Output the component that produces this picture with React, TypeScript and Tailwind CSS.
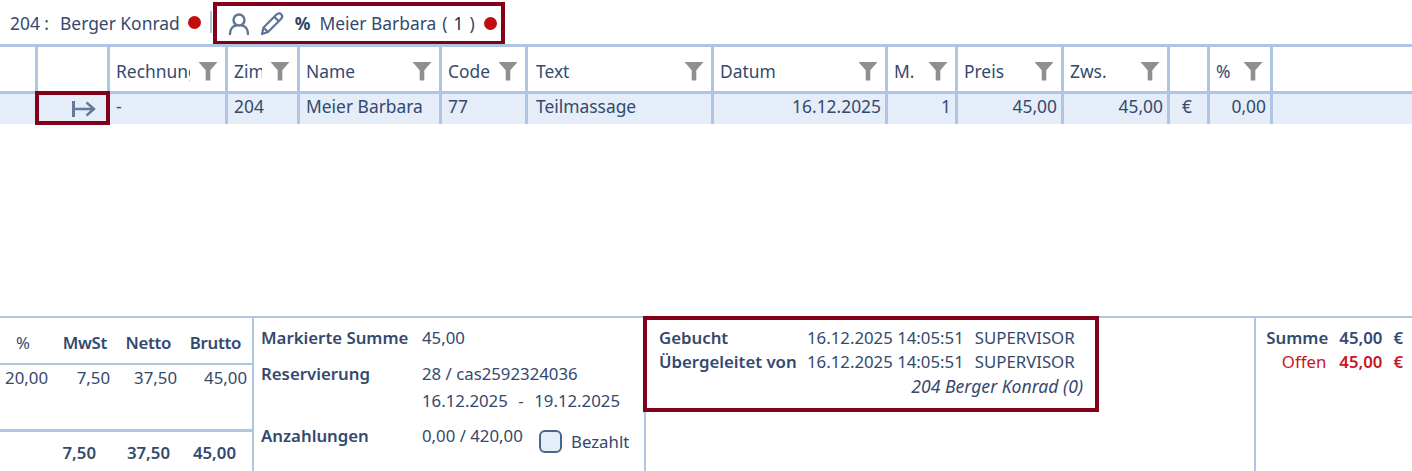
import React from "react";

const cols: { w: number; label?: string; filter?: boolean; value?: string; right?: boolean; center?: boolean; pl?: boolean }[] = [
  { w: 38 },
  { w: 72 },
  { w: 118, label: "Rechnung", filter: true, value: "-" },
  { w: 72, label: "Zimmer", filter: true, value: "204" },
  { w: 142, label: "Name", filter: true, value: "Meier Barbara" },
  { w: 86, label: "Code", filter: true, value: "77" },
  { w: 186, label: "Text", filter: true, value: "Teilmassage", pl: true },
  { w: 174, label: "Datum", filter: true, value: "16.12.2025", right: true },
  { w: 70, label: "M.", filter: true, value: "1", right: true },
  { w: 106, label: "Preis", filter: true, value: "45,00", right: true },
  { w: 106, label: "Zws.", filter: true, value: "45,00", right: true },
  { w: 40, value: "€", center: true },
  { w: 63, label: "%", filter: true, value: "0,00", right: true },
];

function Funnel() {
  return (
    <svg width="20" height="20" viewBox="0 0 20 20" className="shrink-0">
      <path d="M0.5 1h19l-7.2 8.2V19.5h-4.6V9.2z" fill="#8f8f8f" />
    </svg>
  );
}

function Dot() {
  return <span className="block h-[13px] w-[13px] rounded-full bg-[#c00d0d]" />;
}

export default function App() {
  return (
    <div className="relative flex h-[471px] w-[1412px] flex-col overflow-hidden bg-white font-['Noto_Sans','Open_Sans',sans-serif] text-[17.4px] text-[#34496e]">
      <div className="flex h-[44px] items-center pl-[10px]">
        <span className="mt-[2px]">204 :</span>
        <span className="ml-[11px] mt-[2px] whitespace-nowrap">Berger Konrad</span>
        <span className="ml-[8px] flex"><Dot /></span>
        <span className="ml-[9px] h-[22px] w-[2px] bg-[#aec6e4]" />
        <div className="ml-[1px] mt-[3px] flex h-[43px] w-[292px] shrink-0 items-center border-[4px] border-[#83001b] pl-[10px]">
          <svg width="24" height="24" viewBox="0 0 24 24" fill="none" stroke="#5f7595" strokeWidth="2.4" strokeLinecap="round">
            <circle cx="12" cy="8" r="5.5" />
            <path d="M3 22c0-5 3-8 6-8.5M21 22c0-5-3-8-6-8.5" />
          </svg>
          <svg className="ml-[8px]" width="26" height="26" viewBox="0 0 26 26" fill="none" stroke="#5f7595" strokeWidth="2.2" strokeLinejoin="round">
            <path d="M3 23l1.5-6.5L17.5 3.5c1.5-1.5 3.5-1.5 4.7-.2s1.3 3.2-.2 4.7L9 21z" />
            <path d="M5 17l4 4M15.5 6l4.5 4.5" />
          </svg>
          <span className="ml-[10px] font-bold text-[#2a4468]">%</span>
          <span className="ml-[9px] whitespace-nowrap">Meier Barbara</span>
          <span className="ml-[6px]">(</span>
          <span className="ml-[6px] text-[#22304a]">1</span>
          <span className="ml-[6px]">)</span>
          <span className="ml-[9px] flex"><Dot /></span>
        </div>
      </div>

      <div className="border-t-[3px] border-[#aec6e4]">
        <div className="flex h-[47px] border-b-[3px] border-[#aec6e4]">
          {cols.map((c, i) => (
            <div
              key={i}
              style={{ width: c.w }}
              className={
                "flex shrink-0 items-center gap-[8px] overflow-hidden border-r-[3px] border-[#aec6e4] pr-[7px] pt-[4px] " +
                (c.pl ? "pl-[8px]" : "pl-[6px]")
              }
            >
              {c.label ? <span className="min-w-0 flex-1 overflow-hidden whitespace-nowrap">{c.label}</span> : null}
              {c.filter ? <Funnel /> : null}
            </div>
          ))}
          <div className="flex-1" />
        </div>
        <div className="flex h-[30px] bg-[#e5edf8]">
          {cols.map((c, i) => (
            <div
              key={i}
              style={{ width: c.w }}
              className={
                "flex shrink-0 items-center overflow-hidden whitespace-nowrap border-r-[3px] border-[#aec6e4] pb-[5px] " +
                (c.right ? "justify-end pr-[4px]" : c.center ? "justify-center pr-[3px]" : c.pl ? "pl-[8px]" : "pl-[6px]")
              }
            >
              {i === 1 ? (
                <svg className="ml-[28px] mt-[5px]" width="24" height="18" viewBox="0 0 24 18" fill="none" stroke="#66799a" strokeWidth="2.4">
                  <path d="M1.5 1v16" strokeWidth="3" />
                  <path d="M3 9h19M14.5 2.5L22 9l-7.5 6.5" />
                </svg>
              ) : (
                c.value
              )}
            </div>
          ))}
          <div className="flex-1" />
        </div>
      </div>

      <div className="flex-1" />

      <div className="flex h-[155px] border-t-2 border-[#aec6e4] text-[16.8px]">
        <div className="flex w-[254px] shrink-0 flex-col border-r-2 border-[#aec6e4]">
          <div className="grid h-[47px] grid-cols-[47px_60px_64px_70px] items-center border-b-[2px] border-[#aec6e4] pt-[4px] text-right font-semibold">
            <span className="pr-[17px] font-normal">%</span>
            <span className="tracking-[-0.3px]">MwSt</span>
            <span className="tracking-[-0.3px]">Netto</span>
            <span className="tracking-[-0.3px]">Brutto</span>
          </div>
          <div className="grid h-[64px] grid-cols-[48px_62px_67px_70px] text-right">
            <span>20,00</span>
            <span>7,50</span>
            <span>37,50</span>
            <span>45,00</span>
          </div>
          <div className="grid flex-1 grid-cols-[48px_48px_74px_66px] items-center border-t-[3px] border-[#aec6e4] pt-[2px] text-right font-semibold">
            <span />
            <span>7,50</span>
            <span>37,50</span>
            <span>45,00</span>
          </div>
        </div>

        <div className="w-[392px] shrink-0 border-r-2 border-[#aec6e4] pl-[7px] pt-[7px] leading-[25px]">
          <div className="flex">
            <span className="w-[161px] font-semibold">Markierte Summe</span>
            <span>45,00</span>
          </div>
          <div className="mt-[11px] flex">
            <span className="w-[161px] font-semibold">Reservierung</span>
            <span>
              <div>28 / cas2592324036</div>
              <div className="mt-[2px] flex whitespace-nowrap">
                <span>16.12.2025</span>
                <span className="mx-[10.5px]">-</span>
                <span>19.12.2025</span>
              </div>
            </span>
          </div>
          <div className="mt-[10px] flex items-start">
            <span className="w-[161px] font-semibold">Anzahlungen</span>
            <span className="w-[117px] whitespace-nowrap">0,00 / 420,00</span>
            <span className="mt-[7px] h-[23px] w-[23px] shrink-0 rounded-[6px] border-2 border-[#4d6488] bg-[#e5edf8]" />
            <span className="ml-[9px] mt-[6px]">Bezahlt</span>
          </div>
        </div>

        <div className="relative flex-1" />

        <div className="w-[158px] shrink-0 border-l-2 border-[#aec6e4] pr-[9px] pt-[8px] text-right leading-[24px]">
          <div className="flex justify-end font-semibold">
            <span>Summe</span>
            <span className="ml-[11px]">45,00</span>
            <span className="ml-[11px]">€</span>
          </div>
          <div className="flex justify-end font-semibold text-[#c8171d]">
            <span className="font-normal">Offen</span>
            <span className="ml-[13px]">45,00</span>
            <span className="ml-[11px]">€</span>
          </div>
        </div>
      </div>

      <div className="absolute left-[35px] top-[91px] h-[34px] w-[75px] border-[4px] border-[#83001b]" />

      <div className="absolute left-[643px] top-[316px] h-[96px] w-[456px] border-[4px] border-[#83001b] pl-[12px] pt-[6px] text-[16.8px] leading-[24px]">
        <div className="flex">
          <span className="w-[148px] font-semibold">Gebucht</span>
          <span className="whitespace-nowrap">16.12.2025 14:05:51</span>
          <span className="ml-[11px]">SUPERVISOR</span>
        </div>
        <div className="flex">
          <span className="w-[148px] whitespace-nowrap font-semibold">Übergeleitet von</span>
          <span className="whitespace-nowrap">16.12.2025 14:05:51</span>
          <span className="ml-[11px]">SUPERVISOR</span>
        </div>
        <div className="pr-[12px] text-right text-[17.6px] italic">204 Berger Konrad (0)</div>
      </div>
    </div>
  );
}
